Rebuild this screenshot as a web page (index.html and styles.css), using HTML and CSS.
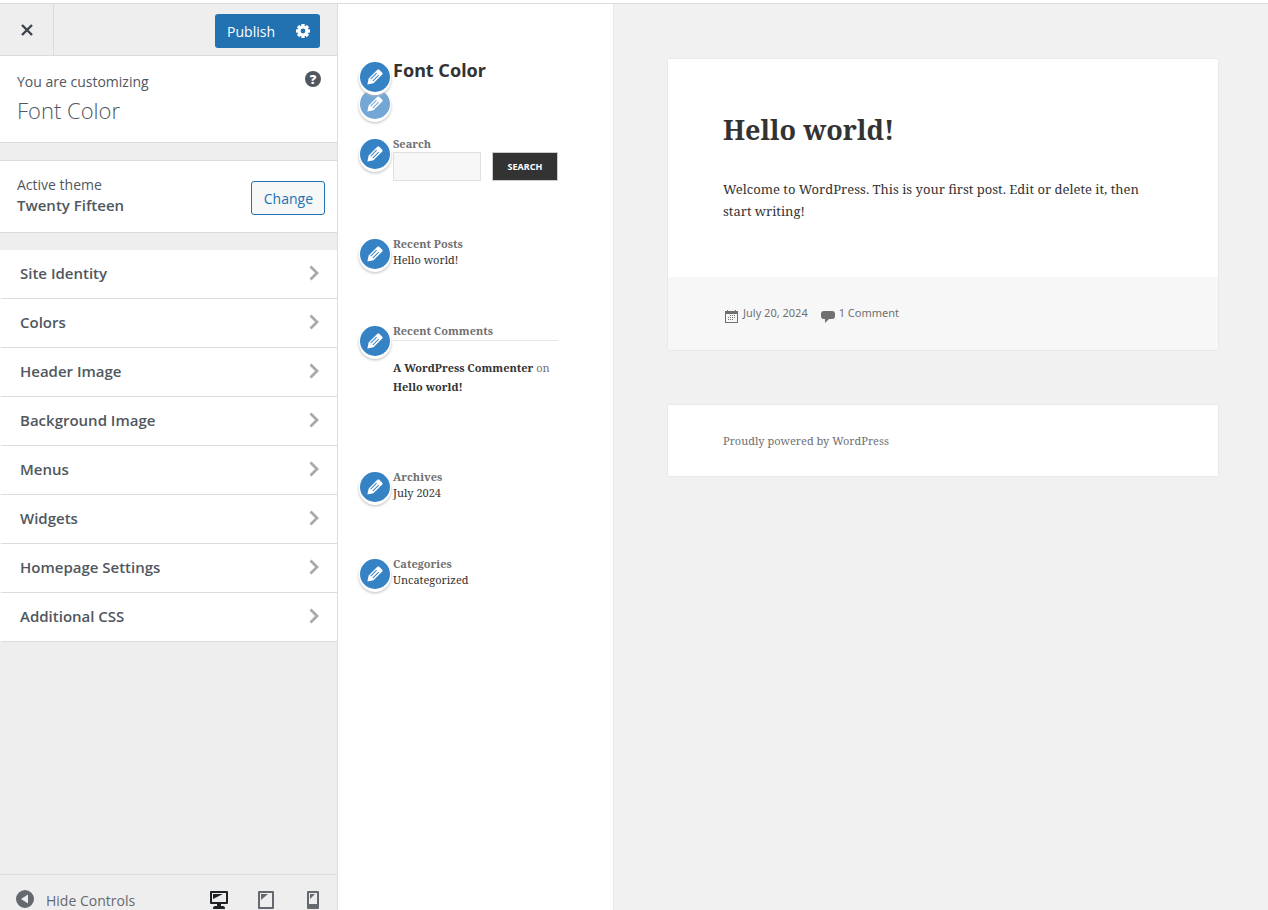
FILE: index.html
```html
<!DOCTYPE html>
<html lang="en">
  <head>
    <meta charset="UTF-8" />
    <meta name="viewport" content="width=device-width, initial-scale=1.0" />
    <title>Customize: Font Color</title>
    <link rel="stylesheet" href="styles.css">
  </head>

  <body>
    <svg class="sprite" aria-hidden="true">
      <symbol id="pencil" viewBox="0 0 20 20">
        <path d="M13.89 3.39l2.71 2.72c.46.46.42 1.24.03 1.64l-8.01 8.02-5.56 1.16 1.16-5.58 7.93-7.95c.39-.39 1.28-.47 1.74-.01zm-2.73 2.79l.59.61-5.4 5.4-.6-.6 5.41-5.41zm1.9 1.88l.6.6-5.42 5.42-.59-.61 5.41-5.41z" fill-rule="evenodd" />
      </symbol>
      <symbol id="arrow" viewBox="0 0 10 16">
        <path d="M1.5 1.5L8 8l-6.500 6.500" fill="none" stroke="currentColor" stroke-width="2.800" />
      </symbol>
    </svg>

    <div class="customizer">
      <aside class="controls">
        <header class="controls__header">
          <button class="close" aria-label="Close">
            <svg viewBox="0 0 12 12" width="12" height="12"><path d="M1 1l10 10M11 1L1 11" fill="none" stroke="currentColor" stroke-width="2.400" /></svg>
          </button>
          <div class="publish">
            <button class="publish__save">Publish</button>
            <button class="publish__settings" aria-label="Publish Settings">
              <svg viewBox="0 0 16 16" width="16" height="16">
                <g fill="currentColor">
                  <circle cx="8" cy="8" r="5.200" />
                  <rect x="6.300" y="1" width="3.400" height="14" rx=".6" />
                  <rect x="6.300" y="1" width="3.400" height="14" rx=".6" transform="rotate(45 8 8)" />
                  <rect x="6.300" y="1" width="3.400" height="14" rx=".6" transform="rotate(90 8 8)" />
                  <rect x="6.300" y="1" width="3.400" height="14" rx=".6" transform="rotate(135 8 8)" />
                </g>
                <circle class="publish__hole" cx="8" cy="8" r="2.400" />
              </svg>
            </button>
          </div>
        </header>

        <section class="info">
          <div>
            <p class="info__label">You are customizing</p>
            <h1 class="info__title">Font Color</h1>
          </div>
          <button class="help" aria-label="Help">?</button>
        </section>

        <section class="theme">
          <div>
            <p class="theme__label">Active theme</p>
            <h2 class="theme__name">Twenty Fifteen</h2>
          </div>
          <button class="theme__change">Change</button>
        </section>

        <nav class="sections">
          <button class="sections__item">Site Identity <svg class="sections__arrow"><use href="#arrow" /></svg></button>
          <button class="sections__item">Colors <svg class="sections__arrow"><use href="#arrow" /></svg></button>
          <button class="sections__item">Header Image <svg class="sections__arrow"><use href="#arrow" /></svg></button>
          <button class="sections__item">Background Image <svg class="sections__arrow"><use href="#arrow" /></svg></button>
          <button class="sections__item">Menus <svg class="sections__arrow"><use href="#arrow" /></svg></button>
          <button class="sections__item">Widgets <svg class="sections__arrow"><use href="#arrow" /></svg></button>
          <button class="sections__item">Homepage Settings <svg class="sections__arrow"><use href="#arrow" /></svg></button>
          <button class="sections__item">Additional CSS <svg class="sections__arrow"><use href="#arrow" /></svg></button>
        </nav>

        <footer class="controls__footer">
          <button class="collapse">
            <svg viewBox="0 0 18 18" width="18" height="18"><path fill="currentColor" fill-rule="evenodd" d="M9 0a9 9 0 1 1 0 18A9 9 0 0 1 9 0zM12 4.500L5 9l7 4.500z" /></svg>
            Hide Controls
          </button>
          <div class="devices">
            <button class="devices__button devices__button--active" aria-label="Desktop">
              <svg viewBox="0 0 20 20" width="20" height="20"><path fill="currentColor" fill-rule="evenodd" d="M2 1h16q1 0 1 1v11q0 1-1 1h-6v2h2q2 0 2 3H4q0-3 2-3h2v-2H2q-1 0-1-1V2q0-1 1-1zm1 2v9h14V3zm1 1h10L4 9z" /></svg>
            </button>
            <button class="devices__button" aria-label="Tablet">
              <svg viewBox="0 0 20 20" width="20" height="20"><path fill="currentColor" fill-rule="evenodd" d="M3 1h14q1 0 1 1v16q0 1-1 1H3q-1 0-1-1V2q0-1 1-1zm1 2v14h12V3zm1 1h7l-7 6z" /></svg>
            </button>
            <button class="devices__button" aria-label="Mobile">
              <svg viewBox="0 0 20 20" width="20" height="20"><path fill="currentColor" fill-rule="evenodd" d="M5 1h10q1 0 1 1v16q0 1-1 1H5q-1 0-1-1V2q0-1 1-1zm1 2v11h8V3zm1 1h5L7 9z" /></svg>
            </button>
          </div>
        </footer>
      </aside>

      <main class="preview">
        <div class="site-sidebar">
          <div class="widget">
            <button class="edit" aria-label="Edit site title"><svg><use href="#pencil" /></svg></button>
            <button class="edit edit--tagline" aria-label="Edit tagline"><svg><use href="#pencil" /></svg></button>
            <a class="site-title" href="#">Font Color</a>
          </div>
          <div class="widget">
            <button class="edit" aria-label="Edit widget"><svg><use href="#pencil" /></svg></button>
            <label class="widget__title" for="search">Search</label>
            <form class="search">
              <input class="search__field" id="search" type="search" />
              <button class="search__submit" type="button">Search</button>
            </form>
          </div>
          <div class="widget">
            <button class="edit" aria-label="Edit widget"><svg><use href="#pencil" /></svg></button>
            <h2 class="widget__title">Recent Posts</h2>
            <a class="widget__link" href="#">Hello world!</a>
          </div>
          <div class="widget">
            <button class="edit" aria-label="Edit widget"><svg><use href="#pencil" /></svg></button>
            <h2 class="widget__title">Recent Comments</h2>
            <p class="comment"><a href="#">A WordPress Commenter</a> on <a href="#">Hello world!</a></p>
          </div>
          <div class="widget">
            <button class="edit" aria-label="Edit widget"><svg><use href="#pencil" /></svg></button>
            <h2 class="widget__title">Archives</h2>
            <a class="widget__link" href="#">July 2024</a>
          </div>
          <div class="widget">
            <button class="edit" aria-label="Edit widget"><svg><use href="#pencil" /></svg></button>
            <h2 class="widget__title">Categories</h2>
            <a class="widget__link" href="#">Uncategorized</a>
          </div>
        </div>

        <div class="site-content">
          <article class="post">
            <div class="post__body">
              <h2 class="post__title">Hello world!</h2>
              <p class="post__text">Welcome to WordPress. This is your first post. Edit or delete it, then start writing!</p>
            </div>
            <footer class="post__meta">
              <a class="meta" href="#">
                <svg viewBox="0 0 14 14" width="14" height="14"><path fill="currentColor" fill-rule="evenodd" d="M0 1h2V0h1v1h7V0h1v1h2v12H0zM1 4v8h11V4z" /><path fill="none" stroke="currentColor" stroke-dasharray="1 1" d="M5 5.500h6M3 7.500h8M3 9.500h6" /></svg>
                July 20, 2024
              </a>
              <a class="meta" href="#">
                <svg viewBox="0 0 14 14" width="14" height="14"><path fill="currentColor" d="M3 1h8q3 0 3 3v2q0 3-3 3H8l-4 4V9H3Q0 9 0 6V4q0-3 3-3z" /></svg>
                1 Comment
              </a>
            </footer>
          </article>
          <footer class="credits"><a href="#">Proudly powered by WordPress</a></footer>
        </div>
      </main>
    </div>
  </body>
</html>
```
FILE: styles.css
```css
* {
  box-sizing: border-box;
}
body {
  margin: 0;
  font-family: "Open Sans", sans-serif;
  font-size: 14px;
  color: #50575e;
}
h1,
h2,
p {
  margin: 0;
}
a {
  color: inherit;
  text-decoration: none;
}
button {
  margin: 0;
  padding: 0;
  border: 0;
  background: none;
  color: inherit;
  font: inherit;
  cursor: pointer;
}
svg {
  display: block;
}
.sprite {
  display: none;
}

.customizer {
  display: flex;
  height: 100vh;
  border-top: 3px solid #fff;
  overflow: hidden;
}

/* left panel */
.controls {
  flex: 0 0 338px;
  display: flex;
  flex-direction: column;
  background: #eee;
  border-top: 1px solid #dcdcde;
  border-right: 1px solid #dcdcde;
}
.controls__header {
  display: flex;
  justify-content: space-between;
  align-items: flex-end;
  height: 52px;
  padding-right: 17px;
  border-bottom: 1px solid #dcdcde;
}
.close {
  display: grid;
  place-items: center;
  width: 54px;
  height: 100%;
  border-right: 1px solid #dcdcde;
  color: #3c434a;
}
.publish {
  display: flex;
  height: 34px;
  margin-bottom: 7px;
  border-radius: 3px;
  background: #2271b1;
  color: #fff;
}
.publish__save {
  padding: 0 10px 0 12px;
}
.publish__settings {
  width: 35px;
  display: grid;
  place-items: center;
}
.publish__hole {
  fill: #2271b1;
}

.info,
.theme {
  display: flex;
  justify-content: space-between;
  background: #fff;
  border-bottom: 1px solid #dcdcde;
}
.info {
  height: 87px;
  padding: 15px 16px 0 17px;
}
.info__label,
.theme__label,
.theme__name {
  font-size: 14px;
  line-height: 21px;
}
.info__title {
  font-size: 22px;
  font-weight: 300;
  line-height: 36px;
}
.help {
  width: 16px;
  height: 16px;
  border-radius: 50%;
  background: #50575e;
  color: #fff;
  font-size: 13px;
  font-weight: 800;
  line-height: 16px;
}
.theme {
  align-items: flex-start;
  height: 73px;
  margin: 17px 0;
  padding: 13px 12px 0 17px;
  border-top: 1px solid #dcdcde;
}
.theme__name {
  font-size: 15px;
  font-weight: 600;
}
.theme__change {
  height: 34px;
  margin-top: 7px;
  padding: 0 11px 0 12px;
  border: 1px solid #2271b1;
  border-radius: 3px;
  background: #f6f7f7;
  color: #2271b1;
}

.sections__item {
  display: flex;
  justify-content: space-between;
  align-items: center;
  width: 100%;
  height: 49px;
  padding: 0 18px 2px;
  border-bottom: 1px solid #dcdcde;
  border-left: 2px solid #fff;
  background: #fff;
  font-size: 15px;
  font-weight: 600;
}
.sections__arrow {
  width: 10px;
  height: 16px;
  color: #a7aaad;
}

.controls__footer {
  display: flex;
  justify-content: space-between;
  align-items: flex-start;
  height: 36px;
  margin-top: auto;
  padding: 15px 14px 0 16px;
  border-top: 1px solid #dcdcde;
  overflow: hidden;
}
.collapse {
  display: flex;
  gap: 12px;
  line-height: 21px;
  color: #646970;
}
.devices {
  display: flex;
  gap: 27px;
}
.devices__button {
  color: #646970;
}
.devices__button--active {
  color: #1d2327;
}

/* site preview */
.preview {
  flex: 1;
  display: flex;
  border-top: 1px solid #dcdcde;
  background: #f1f1f1;
  font-family: "Noto Serif", "Droid Serif", "DejaVu Serif", serif;
  color: #333;
}
.site-sidebar {
  flex: 0 0 276px;
  min-width: 0;
  padding: 55px;
  border-right: 1px solid #eaeaea;
  background: #fff;
  font-size: 11px;
  line-height: 16px;
}
.widget {
  position: relative;
  margin-bottom: 55px;
}
.site-title {
  display: block;
  font-family: "Noto Sans", sans-serif;
  font-size: 18px;
  font-weight: 700;
  line-height: 22px;
}
.widget__title {
  display: block;
  font-size: 11px;
  font-weight: 700;
  line-height: 16px;
  color: #707070;
}
.widget__link {
  display: block;
}
.edit {
  position: absolute;
  top: 3px;
  left: -33px;
  z-index: 1;
  width: 30px;
  height: 30px;
  border-radius: 50%;
  background: #3582c4;
  box-shadow: 0 0 0 1px #fff, 0 2px 0 1px #fff, 0 3px 3px 1px #bbb;
  color: #fff;
}
.edit svg {
  width: 22px;
  height: 22px;
  margin: 0 auto;
  fill: currentColor;
}
.edit--tagline {
  top: 30px;
  z-index: 0;
  background: #72a7d6;
}
.search {
  display: flex;
  gap: 11px;
}
.search__field {
  flex: 1;
  min-width: 0;
  height: 29px;
  border: 1px solid #e0e0e0;
  border-radius: 0;
  background: #f7f7f7;
}
.search__submit {
  width: 66px;
  height: 29px;
  border: 1px solid #ccc;
  background: #333;
  color: #fff;
  font-family: "Noto Sans", sans-serif;
  font-size: 9px;
  font-weight: 700;
  text-transform: uppercase;
}
.comment {
  margin-top: 1px;
  padding: 17px 0 18px;
  border-top: 1px solid #e6e6e6;
  line-height: 19px;
  color: #707070;
}
.comment a {
  color: #333;
  font-weight: 700;
}

.site-content {
  flex: 1;
  padding: 55px 50px 0 54px;
}
.post,
.credits {
  background: #fff;
  box-shadow: 0 0 1px rgba(0, 0, 0, 0.2);
}
.post {
  margin-bottom: 55px;
}
.post__body {
  padding: 53px 55px 55px;
}
.post__title {
  margin-bottom: 30px;
  font-size: 27px;
  line-height: 36px;
}
.post__text {
  font-size: 13px;
  line-height: 22px;
}
.post__meta {
  display: flex;
  gap: 13px;
  height: 73px;
  padding: 28px 57px;
  background: #f7f7f7;
  color: #707070;
  font-family: "Noto Sans", sans-serif;
  font-size: 11px;
  line-height: 16px;
}
.meta {
  display: flex;
  gap: 4px;
}
.meta svg {
  margin-top: 5px;
}
.credits {
  padding: 28px 55px 27px;
  color: #707070;
  font-size: 11px;
  line-height: 16px;
}
```
